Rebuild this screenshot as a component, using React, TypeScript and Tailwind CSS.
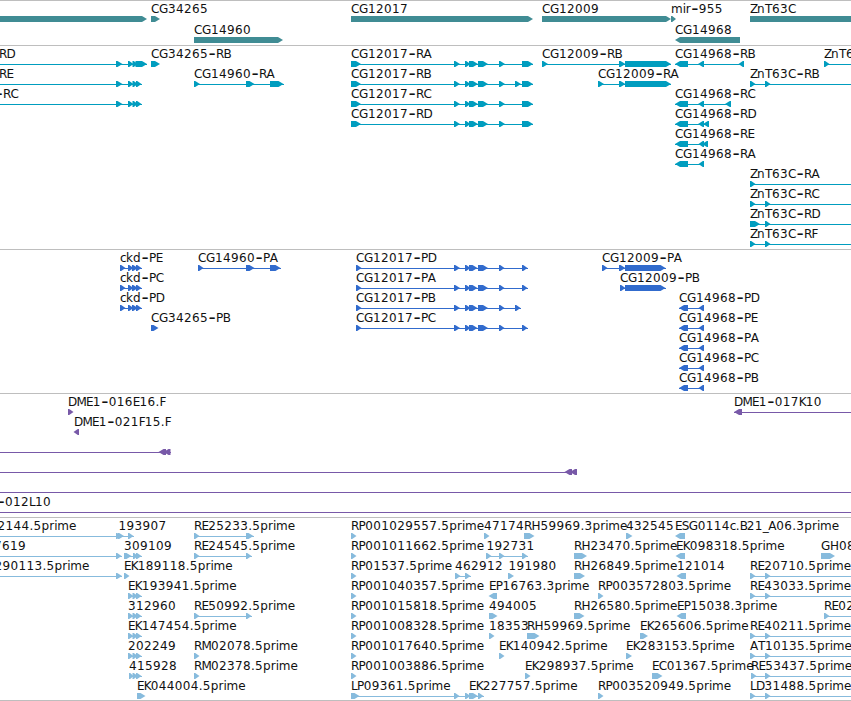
import React from 'react';

type Span = [number, number];

interface Feature {
    label?: string;
    x?: number;
    y: number;
    spans: Span[];
    reverse?: boolean;
    from?: number;
    to?: number;
}

interface TrackProps {
    name: string;
    height: number;
    colorClass: string;
    features: Feature[];
}

const WIDTH = 851;
const HEAD = 5;

const ADVANCE: Record<string, number> = {
    C: 8, G: 9, R: 7.5, A: 8, B: 7, D: 8.5, E: 6.8, F: 6, H: 9, K: 7, L: 6, M: 9.5, P: 6.8, S: 7, T: 7, Z: 7,
    c: 6, k: 7, d: 8, n: 8, p: 7.7, r: 5, i: 3, m: 11.7, e: 6.7, '-': 8, '.': 4, _: 5.5,
};

function glyphPositions(label: string, x: number) {
    let pos = x;
    return [...label].map((ch) => {
        const at = ch === '-' ? pos + 0.5 : pos;
        pos += ADVANCE[ch] ?? 8;
        return at;
    });
}

function arrowPoints([x1, x2]: Span, y: number, reverse?: boolean) {
    const head = Math.min(HEAD, x2 - x1 - 1.2);
    const top = y + 3;
    const mid = y + 6;
    const bottom = y + 9;
    if (reverse) {
        return `${x2},${top} ${x1 + head},${top} ${x1},${mid} ${x1 + head},${bottom} ${x2},${bottom}`;
    }
    return `${x1},${top} ${x2 - head},${top} ${x2},${mid} ${x2 - head},${bottom} ${x1},${bottom}`;
}

function Label({ label, x, y }: { label: string; x: number; y: number }) {
    const dash = label.indexOf('-');
    const xs = glyphPositions(label, x);

    if (dash < 0) {
        return <text x={xs.join(' ')} y={y} className="fill-[#111]">{label}</text>;
    }

    // The hyphen is set larger, so that it reads as a wide dash
    return (
        <text x={xs[0]} y={y} className="fill-[#111]">
            {dash > 0 && <tspan x={xs.slice(0, dash).join(' ')}>{label.slice(0, dash)}</tspan>}
            <tspan x={xs[dash]} y={y + 1.6} className="text-[20px]">-</tspan>
            <tspan x={xs.slice(dash + 1).join(' ')} y={y}>{label.slice(dash + 1)}</tspan>
        </text>
    );
}

function FeatureGlyph({ label, x = 0, y, spans, reverse, from, to }: Feature) {
    const start = from ?? (spans.length ? spans[0][0] : 0);
    const end = to ?? (spans.length ? spans[spans.length - 1][1] : WIDTH);
    const hasLine = spans.length !== 1 || from !== undefined || to !== undefined;

    return (
        <g>
            {hasLine && <rect x={start} y={y + 6} width={end - start} height={1} shapeRendering="crispEdges" />}
            {spans.map((span, i) => (
                <polygon key={i} points={arrowPoints(span, y, reverse)} />
            ))}
            {label && <Label label={label} x={x} y={y} />}
        </g>
    );
}

function Track({ name, height, colorClass, features }: TrackProps) {
    return (
        <section className="border-t border-[#bebebe]">
            <svg width={WIDTH} height={height} aria-label={name} className={`block overflow-hidden ${colorClass}`}>
                {features.map((feature, i) => (
                    <FeatureGlyph key={i} {...feature} />
                ))}
            </svg>
        </section>
    );
}

const genes: Feature[] = [
    { y: 12, spans: [[-20, 147]] },
    { label: 'CG34265', x: 151, y: 12, spans: [[151, 160]] },
    { label: 'CG14960', x: 194, y: 33, spans: [[194, 283]] },
    { label: 'CG12017', x: 351, y: 12, spans: [[351, 533]] },
    { label: 'CG12009', x: 542, y: 12, spans: [[542, 671]] },
    { label: 'mir-955', x: 671, y: 12, spans: [[671, 676]] },
    { label: 'CG14968', x: 675, y: 33, spans: [[675, 740]], reverse: true },
    { label: 'ZnT63C', x: 750, y: 12, spans: [[750, 880]] },
];

const ckdEnd: Span[] = [[116, 122.5], [128, 133.5], [132.5, 138], [136, 141.5]];
const cg12017: Span[] = [[351, 361], [454, 460], [465, 470.5], [469, 478], [478, 488], [499, 505], [522, 533]];

const transcripts: Feature[] = [
    { label: 'RD', x: -1, y: 12, from: -5, spans: [[116, 122.5], [128, 133.5], [132.5, 138], [135.5, 147]] },
    { label: 'RE', x: -1, y: 32, from: -5, spans: ckdEnd },
    { label: '-RC', x: -5, y: 52, from: -5, spans: ckdEnd },
    { label: 'CG34265-RB', x: 151, y: 12, spans: [[151, 160]] },
    { label: 'CG14960-RA', x: 194, y: 32, spans: [[194, 200], [246, 254.5], [270, 283.5]] },
    { label: 'CG12017-RA', x: 351, y: 12, spans: cg12017 },
    { label: 'CG12017-RB', x: 351, y: 32, spans: [...cg12017.slice(0, 6), [515, 521], [522, 533]] },
    { label: 'CG12017-RC', x: 351, y: 52, spans: cg12017 },
    { label: 'CG12017-RD', x: 351, y: 72, spans: cg12017 },
    { label: 'CG12009-RB', x: 542, y: 12, spans: [[542, 548], [619, 625.5], [625, 671]] },
    { label: 'CG12009-RA', x: 598, y: 32, spans: [[598, 604], [619, 625.5], [625, 671]] },
    { label: 'CG14968-RB', x: 675, y: 12, reverse: true, spans: [[675, 688], [698, 704], [738.5, 744]] },
    { label: 'CG14968-RC', x: 675, y: 52, reverse: true, spans: [[675, 688], [698, 704], [725, 731]] },
    { label: 'CG14968-RD', x: 675, y: 72, reverse: true, spans: [[675, 688], [698, 704], [703, 709]] },
    { label: 'CG14968-RE', x: 675, y: 92, reverse: true, spans: [[675, 688], [698.5, 704], [702, 708]] },
    { label: 'CG14968-RA', x: 675, y: 112, reverse: true, spans: [[675, 688], [698.5, 704]] },
    { label: 'ZnT6', x: 824, y: 12, to: 860, spans: [[824, 829.5]] },
    { label: 'ZnT63C-RB', x: 750, y: 32, to: 860, spans: [[750, 755.5], [765, 770.5]] },
    { label: 'ZnT63C-RA', x: 750, y: 132, to: 860, spans: [[750, 755.5]] },
    { label: 'ZnT63C-RC', x: 750, y: 152, to: 860, spans: [[750, 755.5], [765, 770.5]] },
    { label: 'ZnT63C-RD', x: 750, y: 172, to: 860, spans: [[750, 760], [765, 770.5]] },
    { label: 'ZnT63C-RF', x: 750, y: 192, to: 860, spans: [[750, 755.5], [765, 770.5]] },
];

const ckdCds: Span[] = [[120, 125.5], [128, 133.5], [132, 138], [136, 141.5]];
const cg12017Cds: Span[] = [[356, 361.5], [454, 460], [465, 470.5], [469, 477.5], [478, 488], [499, 504.5]];

const proteins: Feature[] = [
    { label: 'ckd-PE', x: 120, y: 12, spans: ckdCds },
    { label: 'ckd-PC', x: 120, y: 32, spans: ckdCds },
    { label: 'ckd-PD', x: 120, y: 52, spans: ckdCds },
    { label: 'CG34265-PB', x: 151, y: 72, spans: [[151, 158.5]] },
    { label: 'CG14960-PA', x: 198, y: 12, spans: [[198, 203.5], [246, 254.5], [270, 280.5]] },
    { label: 'CG12017-PD', x: 356, y: 12, spans: [...cg12017Cds, [522, 527.5]] },
    { label: 'CG12017-PA', x: 356, y: 32, spans: [...cg12017Cds, [522, 527.5]] },
    { label: 'CG12017-PB', x: 356, y: 52, spans: [...cg12017Cds, [515, 520.5]] },
    { label: 'CG12017-PC', x: 356, y: 72, spans: [...cg12017Cds, [522, 527.5]] },
    { label: 'CG12009-PA', x: 602, y: 12, spans: [[602, 607.5], [619, 625.5], [625, 665.5]] },
    { label: 'CG12009-PB', x: 620, y: 32, spans: [[620, 625.5], [625, 665.5]] },
    ...['PD', 'PE', 'PA', 'PC', 'PB'].map((id, i): Feature => ({
        label: `CG14968-${id}`, x: 679, y: 52 + i * 20, reverse: true, spans: [[679, 688], [698.5, 704]],
    })),
];

const bacs: Feature[] = [
    { label: 'DME1-016E16.F', x: 68, y: 12, spans: [[68, 73.5]] },
    { label: 'DME1-021F15.F', x: 74, y: 32, reverse: true, spans: [[73.5, 79]] },
    { y: 52, reverse: true, from: -5, to: 171, spans: [[158.5, 166], [163.5, 170.5]] },
    { y: 72, reverse: true, from: -5, to: 577, spans: [[564.5, 572], [570, 577]] },
    { y: 92, from: -5, to: 860, spans: [] },
    { label: '-012L10', x: -3, y: 112, from: -5, to: 860, spans: [] },
    { label: 'DME1-017K10', x: 734, y: 12, reverse: true, to: 860, spans: [[734, 742]] },
];

const shortExons: Span[] = [[128, 133.5], [132.5, 138], [136, 141.5]];
const znt: Span[] = [[750, 755.5], [765, 770.5]];

const ests: Feature[] = [
    { label: '2144.5prime', x: -2.5, y: 12, from: -5, spans: [[116, 121.5]] },
    { label: '193907', x: 118.5, y: 12, spans: [[118, 124], [128, 133.5]] },
    { label: 'RE25233.5prime', x: 194, y: 12, spans: [[194, 199.5], [246, 253.5]] },
    { label: 'RP001029557.5prime', x: 351, y: 12, spans: [[351, 356.5]] },
    { label: '47174', x: 484, y: 12, spans: [[484, 489.5]] },
    { label: 'RH59969.3prime', x: 524, y: 12, spans: [[524, 534.5]] },
    { label: '432545', x: 626, y: 12, spans: [[626, 632.5]] },
    { label: 'ESG0114c.B21_A06.3prime', x: 675, y: 12, reverse: true, spans: [[675, 685]] },

    { label: '7619', x: -6, y: 32, from: -5, spans: [[116, 121.5]] },
    { label: '309109', x: 124, y: 32, spans: [[124, 131.5], [133, 138], [136, 141.5]] },
    { label: 'RE24545.5prime', x: 194, y: 32, spans: [[194, 199.5], [246, 251.5]] },
    { label: 'RP001011662.5prime', x: 351, y: 32, spans: [[351, 356.5]] },
    { label: '192731', x: 486.5, y: 32, spans: [[486, 491.5], [499, 504.5], [522, 527.5]] },
    { label: 'RH23470.5prime', x: 574, y: 32, spans: [[574, 587]] },
    { label: 'EK098318.5prime', x: 676, y: 32, reverse: true, spans: [[675.5, 685]] },
    { label: 'GH08', x: 821, y: 32, spans: [[821, 835]] },

    { label: '290113.5prime', x: -5.5, y: 52, from: -5, spans: [[116, 122]] },
    { label: 'EK189118.5prime', x: 124, y: 52, spans: [[124, 129.5]] },
    { label: 'RP01537.5prime', x: 351, y: 52, spans: [[351, 356.5]] },
    { label: '462912', x: 455, y: 52, spans: [[455, 460.5], [465, 470.5]] },
    { label: '191980', x: 508.5, y: 52, spans: [[508, 514]] },
    { label: 'RH26849.5prime', x: 574, y: 52, spans: [[574, 585]] },
    { label: '121014', x: 677, y: 52, reverse: true, spans: [[676.5, 686]] },
    { label: 'RE20710.5prime', x: 750, y: 52, to: 860, spans: znt },

    { label: 'EK193941.5prime', x: 128, y: 72, spans: shortExons },
    { label: 'RP001040357.5prime', x: 351, y: 72, spans: [[351, 356.5]] },
    { label: 'EP16763.3prime', x: 489, y: 72, reverse: true, spans: [[488.5, 497]] },
    { label: 'RP003572803.5prime', x: 598, y: 72, spans: [[598, 603.5]] },
    { label: 'RE43033.5prime', x: 750, y: 72, to: 860, spans: znt },

    { label: '312960', x: 128, y: 92, spans: shortExons },
    { label: 'RE50992.5prime', x: 194, y: 92, spans: [[194, 199.5], [246, 251.5]] },
    { label: 'RP001015818.5prime', x: 351, y: 92, spans: [[351, 356.5]] },
    { label: '494005', x: 489, y: 92, spans: [[489, 497.5]] },
    { label: 'RH26580.5prime', x: 574, y: 92, spans: [[574, 584.5]] },
    { label: 'EP15038.3prime', x: 677, y: 92, reverse: true, spans: [[676.5, 686]] },
    { label: 'RE02', x: 824, y: 92, to: 860, spans: [[824, 829.5]] },

    { label: 'EK147454.5prime', x: 128, y: 112, spans: shortExons },
    { label: 'RP001008328.5prime', x: 351, y: 112, spans: [[351, 356.5]] },
    { label: '18353', x: 489, y: 112, spans: [[489, 494.5]] },
    { label: 'RH59969.5prime', x: 527, y: 112, spans: [[527, 539.5]] },
    { label: 'EK265606.5prime', x: 640, y: 112, spans: [[640, 648]] },
    { label: 'RE40211.5prime', x: 750, y: 112, to: 860, spans: znt },

    { label: '202249', x: 128, y: 132, spans: shortExons },
    { label: 'RM02078.5prime', x: 194, y: 132, spans: [[194, 199.5]] },
    { label: 'RP001017640.5prime', x: 351, y: 132, spans: [[351, 356.5]] },
    { label: 'EK140942.5prime', x: 499, y: 132, spans: [[499, 504.5]] },
    { label: 'EK283153.5prime', x: 626, y: 132, spans: [[626, 632]] },
    { label: 'AT10135.5prime', x: 750, y: 132, to: 860, spans: znt },

    { label: '415928', x: 129, y: 152, spans: [[129, 133.5], [132.5, 138], [136, 141.5]] },
    { label: 'RM02378.5prime', x: 194, y: 152, spans: [[194, 199.5]] },
    { label: 'RP001003886.5prime', x: 351, y: 152, spans: [[351, 356.5]] },
    { label: 'EK298937.5prime', x: 525, y: 152, spans: [[525, 530.5]] },
    { label: 'EC01367.5prime', x: 652, y: 152, spans: [[652, 662.5]] },
    { label: 'RE53437.5prime', x: 751, y: 152, to: 860, spans: [[751, 756.5], [765, 770.5]] },

    { label: 'EK044004.5prime', x: 137, y: 172, spans: [[137, 145.5]] },
    { label: 'LP09361.5prime', x: 351, y: 172, spans: [[351, 359.5], [454, 459.5], [465, 470.5]] },
    { label: 'EK227757.5prime', x: 469, y: 172, spans: [[469, 478], [478, 483.5]] },
    { label: 'RP003520949.5prime', x: 598, y: 172, spans: [[598, 603.5]] },
    { label: 'LD31488.5prime', x: 750, y: 172, to: 860, spans: znt },
];

export default function App() {
    return (
        <main className="flex flex-col w-[851px] h-[701px] overflow-hidden bg-white border-b border-[#bebebe] text-[12px] font-['DejaVu_Sans','Liberation_Sans',sans-serif]">
            <Track name="Genes" height={44} colorClass="fill-[#408c94]" features={genes} />
            <Track name="Transcripts" height={203} colorClass="fill-[#009dbf]" features={transcripts} />
            <Track name="Proteins" height={143} colorClass="fill-[#316bcd]" features={proteins} />
            <Track name="BACs" height={123} colorClass="fill-[#7859a8]" features={bacs} />
            <Track name="ESTs" height={182} colorClass="fill-[#87bbdd]" features={ests} />
        </main>
    );
}
